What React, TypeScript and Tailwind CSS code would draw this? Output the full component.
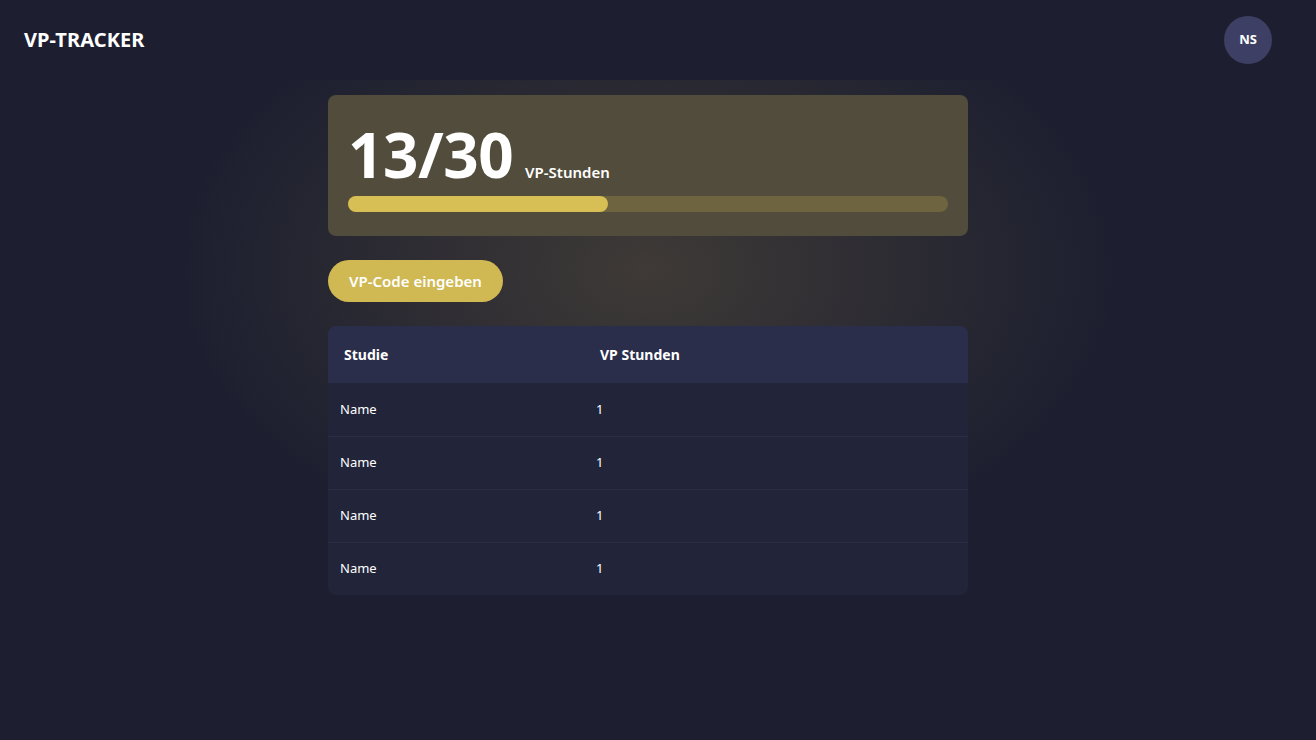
import React from "react";

const rows = [
  { name: "Name", hours: 1 },
  { name: "Name", hours: 1 },
  { name: "Name", hours: 1 },
  { name: "Name", hours: 1 },
];

export default function App() {
  const done = 13;
  const total = 30;
  return (
    <div
      className="min-h-screen w-full bg-[#1d1f30] text-white"
      style={{ fontFamily: '"Noto Sans", "Open Sans", sans-serif' }}
    >
      <div className="w-[1296px]">
        <header className="flex h-[80px] items-center justify-between px-6">
          <div className="text-[20px] font-bold tracking-[0.1px]">VP-TRACKER</div>
          <div className="flex h-12 w-12 items-center justify-center rounded-full bg-[#3d3f64] text-[13px] font-bold">
            NS
          </div>
        </header>
        <main className="min-h-[660px] bg-[radial-gradient(ellipse_470px_300px_at_648px_190px,rgba(90,80,60,0.55),rgba(90,80,60,0)_100%)] pt-[15px]">
          <div className="mx-auto w-[640px]">
            <section className="rounded-lg bg-[#524c3c] px-5 pb-6 pt-[23px]">
              <div className="flex items-baseline gap-3">
                <span className="text-[62px] font-bold leading-[72px] tracking-[-0.5px]">
                  {done}/{total}
                </span>
                <span className="text-[15px] font-semibold">VP-Stunden</span>
              </div>
              <div className="mt-[6px] h-4 w-full rounded-full bg-[#6e6540]">
                <div
                  className="h-4 rounded-full bg-[#d7be55]"
                  style={{ width: `${(done / total) * 100}%` }}
                />
              </div>
            </section>
            <button className="mt-6 h-[42px] rounded-full bg-[#d0b852] px-[21px] text-[15px] font-semibold text-white">
              VP-Code eingeben
            </button>
            <div className="mt-6 overflow-hidden rounded-lg bg-[#22253a]">
              <div className="flex h-[57px] items-center bg-[#2b2e4b] text-[14px] font-bold">
                <div className="w-[256px] px-4">Studie</div>
                <div className="px-4">VP Stunden</div>
              </div>
              {rows.map((r, i) => (
                <div
                  key={i}
                  className={`flex h-[53px] items-center text-[13px] ${
                    i > 0 ? "border-t border-[#292c42]" : ""
                  }`}
                >
                  <div className="w-[256px] px-3">{r.name}</div>
                  <div className="px-3">{r.hours}</div>
                </div>
              ))}
            </div>
          </div>
        </main>
      </div>
    </div>
  );
}
